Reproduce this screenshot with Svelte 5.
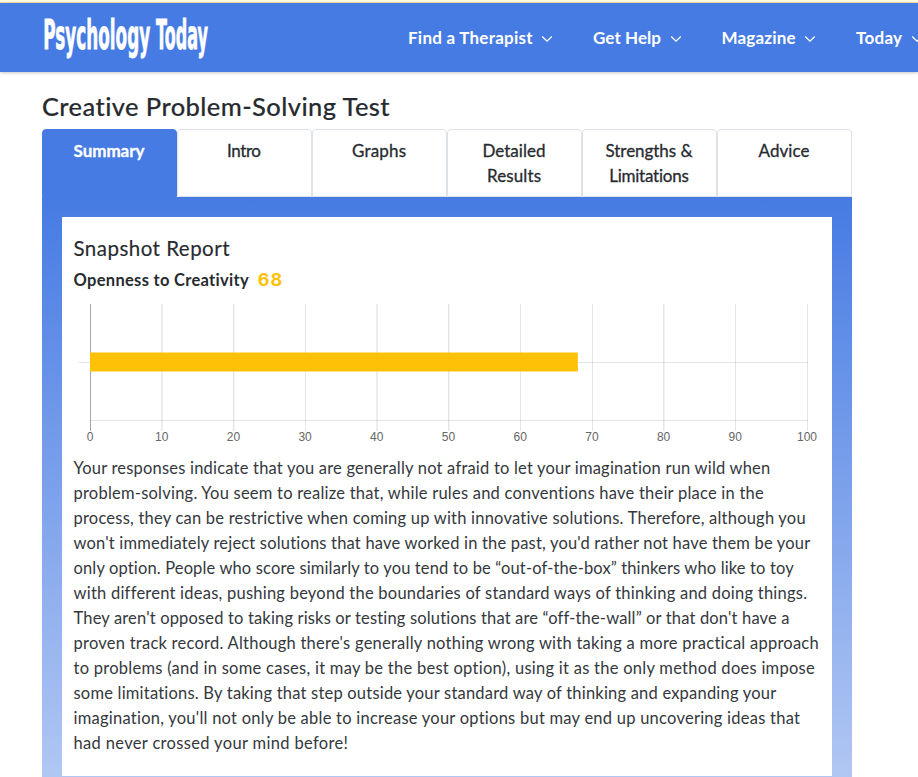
<script>
  const nav = [
    { label: 'Find a Therapist', w: 124.5, gap: 0 },
    { label: 'Get Help', w: 68, gap: 40 },
    { label: 'Magazine', w: 74, gap: 40 },
    { label: 'Today', w: 46, gap: 40 }
  ];
  const tabs = [
    [['Summary', 71]],
    [['Intro', 34]],
    [['Graphs', 54]],
    [['Detailed', 63], ['Results', 54]],
    [['Strengths &', 87], ['Limitations', 80]],
    [['Advice', 51]]
  ];
  const ticks = [0, 10, 20, 30, 40, 50, 60, 70, 80, 90, 100];
  const score = 68;
  const report = [
    ['Your responses indicate that you are generally not afraid to let your imagination run wild when', 697],
    ['problem-solving. You seem to realize that, while rules and conventions have their place in the', 690.5],
    ['process, they can be restrictive when coming up with innovative solutions. Therefore, although you', 733],
    ["won't immediately reject solutions that have worked in the past, you'd rather not have them be your", 737],
    ['only option. People who score similarly to you tend to be “out-of-the-box” thinkers who like to toy', 720.5],
    ['with different ideas, pushing beyond the boundaries of standard ways of thinking and doing things.', 733],
    ["They aren't opposed to taking risks or testing solutions that are “off-the-wall” or that don't have a", 716],
    ["proven track record. Although there's generally nothing wrong with taking a more practical approach", 745.5],
    ['to problems (and in some cases, it may be the best option), using it as the only method does impose', 741.5],
    ['some limitations. By taking that step outside your standard way of thinking and expanding your', 703],
    ["imagination, you'll not only be able to increase your options but may end up uncovering ideas that", 727],
    ['had never crossed your mind before!', 274.5]
  ];

  // Tracks a line of text out or in so that it fills the given measure.
  function fit(node, width) {
    const natural = node.getBoundingClientRect().width;
    const n = node.textContent.length;
    const spacing = (width - natural) / (n - 1);
    node.style.letterSpacing = `${spacing}px`;
    node.style.marginRight = `${-spacing}px`;
  }
</script>

<div class="page">
  <div class="notice"></div>
  <header>
    <svg class="logo" width="168" height="44" viewBox="0 0 168 44" aria-label="Psychology Today">
      <text transform="translate(0.3 34) scale(.421 1)">Psychology</text>
      <text transform="translate(113 34) scale(.4 1)">Today</text>
    </svg>
    <nav>
      {#each nav as item}
        <a style:margin-left="{item.gap}px">
          <span use:fit={item.w}>{item.label}</span>
          <svg width="12" height="8" viewBox="0 0 12 8"><path d="M1.2 1.5 6 6.2l4.8-4.7" /></svg>
        </a>
      {/each}
    </nav>
  </header>

  <main>
    <h1><span use:fit={348}>Creative Problem-Solving Test</span></h1>
    <div class="tabs">
      {#each tabs as lines, i}
        <div class="tab" class:active={i === 0}>
          {#each lines as [label, w]}
            <div><span use:fit={w}>{label}</span></div>
          {/each}
        </div>
      {/each}
    </div>
    <div class="panel">
      <section>
        <h2><span use:fit={156}>Snapshot Report</span></h2>
        <h3><span use:fit={175.5}>Openness to Creativity</span><b use:fit={24.5}>{score}</b></h3>
        <svg class="chart" width="746" height="150" viewBox="74 298 746 150">
          {#each ticks as t}
            <rect x={t % 30 === 0 || t === 100 || t === 70 ? 90 + Math.round(t * 7.17) : 89.5 + t * 7.17} y="304" width={t % 30 === 0 || t === 100 || t === 70 ? 1 : 1.4} height="127" fill={t ? '#e5e5e5' : '#a6a6a6'} />
          {/each}
          <rect x="79" y="362" width="729" height="1" fill="#000" fill-opacity=".1" />
          <rect x="90" y="420" width="718" height="1" fill="#000" fill-opacity=".1" />
          <rect x="90" y="352.5" width={score * 7.17 + 0.3} height="19" fill="#ffc107" />
          {#each ticks as t}
            <text x={90 + t * 7.17} y="441">{t}</text>
          {/each}
        </svg>
        <p>
          {#each report as [line, w]}
            <span class="line"><span use:fit={w}>{line}</span></span>
          {/each}
        </p>
      </section>
    </div>
  </main>
</div>

<style>
  :global(body) { background: #fff; overflow: hidden; }
  .page {
    width: 918px; height: 777px; overflow: hidden;
    font-family: Lato, "Open Sans", sans-serif;
    color: #272b30;
  }
  span, b { white-space: nowrap; display: inline-block; }
  .notice { box-sizing: border-box; height: 3px; background: #fff9e3; border-bottom: 1px solid #f3dfa0; }
  header {
    height: 69px; background: #467be3; display: flex;
    box-shadow: 0 1px 3px rgba(0, 0, 0, .22);
  }
  .logo { margin: 12px 0 0 43px; flex: none; overflow: visible; }
  .logo text { font: bold 40px "DejaVu Sans", sans-serif; fill: #fff; stroke: #fff; stroke-width: .9px; }
  nav { display: flex; align-items: center; margin-left: 197px; height: 71px; flex: none; }
  a { display: flex; align-items: center; color: #fff; font-size: 17px; font-weight: 700; line-height: 20px; padding-bottom: 1px; flex: none; }
  a svg { margin-left: 8.5px; margin-top: 1px; }
  a path { fill: none; stroke: #fff; stroke-width: 1.3; }
  main { width: 810px; margin-left: 42px; }
  h1 { margin: 0; padding-top: 19px; height: 38px; line-height: 30px; font-size: 25.5px; font-weight: 500; }
  h1, h2 { -webkit-text-stroke: .15px currentColor; }
  .tabs { display: flex; height: 68px; }
  .tab {
    box-sizing: border-box; width: 135px; height: 68px; padding-top: 8px;
    border: 1px solid #dee2e6; border-radius: 4px 4px 0 0;
    text-align: center; font-size: 17px; line-height: 25px; -webkit-text-stroke: .3px currentColor;
  }
  .tab.active { background: #467be3; border-color: #467be3; color: #fff; font-weight: 700; }
  .tab span { transform: translateX(-.5px); }
  .panel { height: 580px; box-sizing: border-box; padding: 20px 20px 1px; background: linear-gradient(#467be3, #b1c7f3); }
  section { box-sizing: border-box; height: 559px; padding: 17px 12px 0 11.5px; background: #fff; }
  h2 { margin: 0; font-size: 20.5px; line-height: 28px; font-weight: 400; }
  h3 { margin: 0; height: 36px; display: flex; font-size: 16.5px; line-height: 36px; font-weight: 700; }
  h3 b { color: #ffc107; font-family: Inter, sans-serif; font-size: 18px; font-weight: 700; margin-left: 9px; line-height: 35px; }
  .chart { display: block; margin-left: .5px; }
  .chart text { font: 12px "Liberation Sans", Arial, sans-serif; fill: #666; text-anchor: middle; }
  p { margin: 8px 0 0; font-size: 16.5px; line-height: 25px; color: #34383d; }
  .line { display: block; height: 25px; }
</style>
